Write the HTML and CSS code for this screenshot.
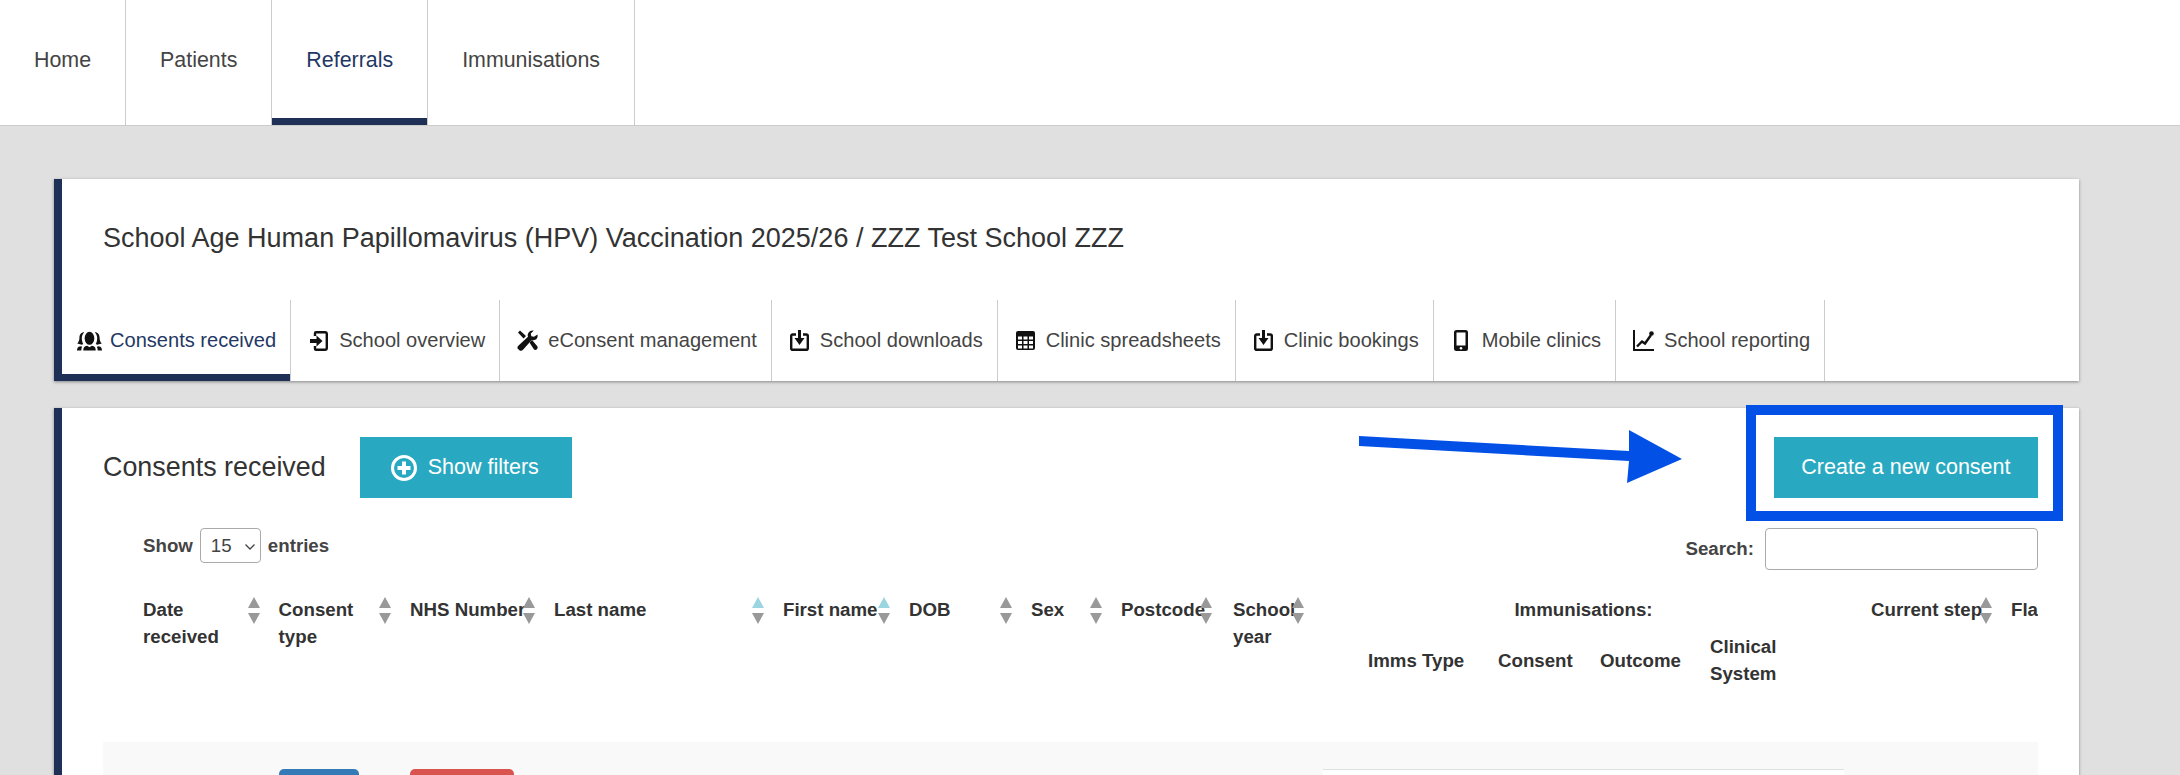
FILE: index.html
```html
<!DOCTYPE html>
<html lang="en">

<head>
    <meta charset="UTF-8">
    <title>Referrals</title>
    <link rel="stylesheet" href="styles.css">
</head>

<body>
    <nav class="topnav">
        <a class="topnav-item">Home</a>
        <a class="topnav-item">Patients</a>
        <a class="topnav-item active">Referrals</a>
        <a class="topnav-item">Immunisations</a>
    </nav>

    <main class="page">
        <section class="panel">
            <h1 class="panel-title">School Age Human Papillomavirus (HPV) Vaccination 2025/26 / ZZZ Test School ZZZ</h1>
            <div class="subtabs">
                <a class="subtab active">
                    <span class="tab-icon">
                        <svg width="26" height="20" viewBox="0 0 26 20">
                            <ellipse cx="13" cy="7.2" rx="5" ry="6.8" />
                            <path d="M6.5 20c0-3 1-4.6 4-5l2.500 1.500 2.500-1.500c3 .4 4 2 4 5z" />
                            <path d="M7.500 0.800c-3.500 0-5 2.700-5 5.700 0 2.500-.8 4.700-2.300 6.200l4.800 1.300 1.500-.8c-1-1.700-1.500-3.700-1.500-6 0-2.400.6-4.500 2.500-6.400z" />
                            <path d="M18.500 0.800c3.500 0 5 2.700 5 5.700 0 2.500.8 4.700 2.300 6.200l-4.800 1.300-1.500-.8c1-1.700 1.500-3.700 1.500-6 0-2.400-.6-4.500-2.500-6.400z" />
                            <path d="M0 20c0-2.300.6-4 3.500-4.600l2 .6c-.8 1-1 2.400-1 4zM26 20c0-2.300-.6-4-3.500-4.600l-2 .6c.8 1 1 2.400 1 4z" />
                        </svg>
                    </span>Consents received
                </a>
                <a class="subtab">
                    <span class="tab-icon">
                        <svg width="18" height="20" viewBox="0 0 18 20">
                            <path class="line" d="M5 5V2.200q0-1 1-1h9q1.800 0 1.800 1.800v14q0 1.800-1.800 1.800H6q-1 0-1-1V15" />
                            <path d="M0 8h6.500V4.500L12.500 10l-6 5.500V12H0z" />
                        </svg>
                    </span>School overview
                </a>
                <a class="subtab">
                    <span class="tab-icon">
                        <svg width="21" height="21" viewBox="0 0 21 21">
                            <path d="M20.500 4.500c.5 2.500-.3 4.300-2.200 5.300-1.200.6-2.500.6-3.600.2L5.800 20q-.8.800-1.800.8H3L.5 18.500v-1q0-1 .8-1.800l9.700-9c-.5-1.300-.4-2.600.3-3.800C12.500.9 14.500.1 16.800.5l-3 3 .5 2.700 2.700.5z" />
                            <path d="M1 2.500L3 .5l6 5.500-2.500 2.500zM12.500 12.500l2.500-2.500 5.500 6.500q.5 1.500-.5 2.700-1.500 1.300-3 .3z" />
                        </svg>
                    </span>eConsent management
                </a>
                <a class="subtab">
                    <span class="tab-icon">
                        <svg width="19" height="21" viewBox="0 0 19 21">
                            <path class="line" d="M6 4.500H2.800q-1.600 0-1.600 1.600v12.100q0 1.600 1.600 1.600h13.400q1.600 0 1.600-1.600V6.100q0-1.600-1.600-1.600H13" />
                            <path d="M8 0h3v8h3.500l-5 7-5-7H8z" />
                        </svg>
                    </span>School downloads
                </a>
                <a class="subtab">
                    <span class="tab-icon">
                        <svg width="19" height="19" viewBox="0 0 19 19">
                            <rect width="19" height="19" rx="2" />
                            <path class="cells" d="M2 5.500h4v3H2zM7.500 5.500h4v3h-4zM13 5.500h4v3h-4zM2 10h4v3H2zM7.500 10h4v3h-4zM13 10h4v3h-4zM2 14.500h4v3H2zM7.500 14.500h4v3h-4zM13 14.500h4v3h-4z" />
                        </svg>
                    </span>Clinic spreadsheets
                </a>
                <a class="subtab">
                    <span class="tab-icon">
                        <svg width="19" height="21" viewBox="0 0 19 21">
                            <path class="line" d="M6 4.500H2.800q-1.600 0-1.600 1.600v12.100q0 1.600 1.600 1.600h13.400q1.600 0 1.600-1.600V6.100q0-1.600-1.600-1.600H13" />
                            <path d="M8 0h3v8h3.500l-5 7-5-7H8z" />
                        </svg>
                    </span>Clinic bookings
                </a>
                <a class="subtab">
                    <span class="tab-icon">
                        <svg width="14" height="21" viewBox="0 0 14 21">
                            <rect width="14" height="21" rx="2.500" />
                            <rect class="cells" x="2.500" y="2.500" width="9" height="13" />
                            <circle class="cells" cx="7" cy="18.200" r="1.300" />
                        </svg>
                    </span>Mobile clinics
                </a>
                <a class="subtab">
                    <span class="tab-icon">
                        <svg width="21" height="21" viewBox="0 0 21 21">
                            <path d="M0 0h2v19h19v2H0z" />
                            <path class="line" d="M4 16.500l5-5 3 2 6-8.500" />
                            <circle cx="18.500" cy="3.500" r="2.300" />
                        </svg>
                    </span>School reporting
                </a>
            </div>
        </section>

        <section class="panel panel-list">
            <div class="list-head">
                <div class="list-head-left">
                    <h2 class="list-title">Consents received</h2>
                    <button class="btn btn-filters">
                        <svg class="btn-icon" width="26" height="26" viewBox="0 0 26 26">
                            <circle cx="13" cy="13" r="11.500" fill="none" stroke="#fff" stroke-width="3" />
                            <path d="M11 6.500h4V11h4.500v4H15v4.500h-4V15H6.500v-4H11z" fill="#fff" />
                        </svg>
                        Show filters
                    </button>
                </div>
                <button class="btn btn-create">Create a new consent</button>
            </div>

            <div class="table-wrap">
                <div class="table-tools">
                    <label class="entries">Show
                        <select class="entries-select">
                            <option>15</option>
                        </select>
                        entries</label>
                    <label class="search">Search: <input class="search-input" type="text"></label>
                </div>

                <table class="consents">
                    <colgroup>
                        <col class="c-date">
                        <col class="c-type">
                        <col class="c-nhs">
                        <col class="c-last">
                        <col class="c-first">
                        <col class="c-dob">
                        <col class="c-sex">
                        <col class="c-post">
                        <col class="c-year">
                        <col class="c-imms">
                        <col class="c-step">
                        <col class="c-flags">
                    </colgroup>
                    <thead>
                        <tr>
                            <th class="first">Date<br>received<span class="sort"></span></th>
                            <th>Consent<br>type<span class="sort"></span></th>
                            <th>NHS Number<span class="sort"></span></th>
                            <th>Last name<span class="sort asc"></span></th>
                            <th>First name<span class="sort asc"></span></th>
                            <th>DOB<span class="sort"></span></th>
                            <th>Sex<span class="sort"></span></th>
                            <th>Postcode<span class="sort sort-post"></span></th>
                            <th>School<br>year<span class="sort"></span></th>
                            <th class="imms">
                                <div class="imms-title">Immunisations:</div>
                                <div class="imms-cols">
                                    <span>Imms Type</span>
                                    <span>Consent</span>
                                    <span>Outcome</span>
                                    <span>Clinical<br>System</span>
                                </div>
                            </th>
                            <th>Current step<span class="sort"></span></th>
                            <th>Flags</th>
                        </tr>
                    </thead>
                    <tbody>
                        <tr class="odd">
                            <td></td>
                            <td><a class="pill pill-blue"></a></td>
                            <td><a class="pill pill-red"></a></td>
                            <td></td>
                            <td></td>
                            <td></td>
                            <td></td>
                            <td></td>
                            <td></td>
                            <td><div class="imms-box"></div></td>
                            <td></td>
                            <td></td>
                        </tr>
                    </tbody>
                </table>
            </div>

            <!-- annotation drawn over the screenshot -->
            <svg class="note-arrow" width="324" height="54" viewBox="0 0 324 54">
                <path d="M0 6L270 21 270 0 323 29 268 53 270 31 0 16z" fill="#0350e6" />
            </svg>
            <div class="note-box"></div>
        </section>
    </main>
</body>

</html>
```

FILE: styles.css
```css
html,
body {
    height: 775px;
    overflow: hidden;
}

body {
    font-family: "Liberation Sans", Arial, sans-serif;
    background-color: #e0e0e0;
    color: #333;
    margin: 0;
    padding: 0;
}

.topnav {
    display: flex;
    height: 125px;
    background-color: #fff;
    border-bottom: 1px solid #ccc;
}

.topnav-item {
    display: flex;
    align-items: center;
    padding: 0 34px 5px;
    font-size: 21.400px;
    color: #444;
    border-right: 1px solid #ccc;
}

.topnav-item.active {
    color: #1f3864;
    box-shadow: inset 0 -7px 0 #1f3057;
}

.page {
    padding: 53px 101px 0 54px;
}

.panel {
    background-color: #fff;
    border-left: 8px solid #1f3057;
    box-shadow: 0 1px 3px rgba(0, 0, 0, 0.4);
}

.panel-title {
    margin: 0;
    padding: 44px 41px 47px;
    font-size: 27px;
    line-height: 30px;
    font-weight: normal;
    color: #333;
}

.subtabs {
    display: flex;
    height: 81px;
}

.subtab {
    display: flex;
    align-items: center;
    padding: 0 14px 0 15px;
    font-size: 20.070px;
    color: #444;
    border-right: 1px solid #ccc;
}

.subtab.active {
    color: #1f3864;
    box-shadow: inset 0 -7px 0 #1f3057;
}

.tab-icon {
    display: flex;
    justify-content: center;
    width: 25px;
    margin-right: 8px;
}

.tab-icon svg {
    fill: #111;
}

.tab-icon .line {
    fill: none;
    stroke: #111;
    stroke-width: 2.400;
}

.tab-icon .cells {
    fill: #fff;
}

.panel-list {
    position: relative;
    margin-top: 27px;
    height: 500px;
    padding: 29px 41px 0;
}

.list-head {
    display: flex;
    justify-content: space-between;
}

.list-head-left {
    display: flex;
    align-items: center;
    gap: 34px;
}

.list-title {
    margin: 0;
    font-size: 26.900px;
    font-weight: normal;
    color: #333;
}

.btn {
    display: flex;
    align-items: center;
    gap: 11px;
    height: 61px;
    border: none;
    background-color: #29a9c1;
    color: #fff;
    font-family: inherit;
    font-size: 21.500px;
    cursor: pointer;
}

.btn-filters {
    padding: 0 33px 0 31px;
}

.btn-create {
    padding: 0 27.500px;
}

.table-wrap {
    overflow: hidden;
}

.table-tools {
    display: flex;
    justify-content: space-between;
    margin-top: 30px;
    height: 62px;
    font-size: 18.700px;
    font-weight: bold;
    color: #444;
}

.entries {
    display: flex;
    align-items: center;
    gap: 7px;
    height: 35px;
    padding-left: 40px;
}

.entries-select {
    appearance: none;
    width: 61px;
    height: 35px;
    padding-left: 10px;
    background: #fff url("data:image/svg+xml,%3Csvg xmlns='http://www.w3.org/2000/svg' width='10' height='6'%3E%3Cpath d='M.5.5l4.500 4.500 4.500-4.500' fill='none' stroke='%23444' stroke-width='1.300'/%3E%3C/svg%3E") no-repeat 44px 15px;
    border: 1px solid #aaa;
    border-radius: 4px;
    font-family: inherit;
    font-size: 18.700px;
    color: #444;
}

.search {
    display: flex;
    align-items: center;
    gap: 11px;
    height: 42px;
}

.search-input {
    width: 273px;
    height: 42px;
    box-sizing: border-box;
    background-color: #fff;
    border: 1px solid #aaa;
    border-radius: 4px;
}

.consents {
    table-layout: fixed;
    width: 2047px;
    border-collapse: collapse;
    font-size: 18.700px;
    line-height: 27px;
    color: #333;
}

.c-date { width: 175.600px; }
.c-type { width: 131.400px; }
.c-nhs { width: 144px; }
.c-last { width: 229px; }
.c-first { width: 126px; }
.c-dob { width: 122px; }
.c-sex { width: 90px; }
.c-post { width: 112px; }
.c-year { width: 90px; }
.c-imms { width: 548px; }
.c-step { width: 140px; }
.c-flags { width: 139px; }

.consents th {
    position: relative;
    height: 152px;
    box-sizing: border-box;
    padding: 6px 0 0;
    vertical-align: top;
    text-align: left;
    white-space: nowrap;
}

.consents th.first {
    padding-left: 40px;
}

.consents td {
    height: 60px;
    padding: 27px 0 0;
    vertical-align: top;
    background-color: #f9f9f9;
}

/* datatables style sort arrows, they sit over the header text */
.sort {
    position: absolute;
    top: 7px;
    right: 19px;
    width: 12px;
    height: 28px;
}

.sort-post {
    right: 21px;
}

.sort::before,
.sort::after {
    content: "";
    position: absolute;
    left: 0;
    border-left: 6px solid transparent;
    border-right: 6px solid transparent;
}

.sort::before {
    top: 0;
    border-bottom: 11px solid #999;
}

.sort::after {
    top: 16px;
    border-top: 11px solid #999;
}

.sort.asc::before {
    border-bottom-color: #9ad5e0;
}

.consents th.imms {
    padding-right: 27px;
}

.imms-title {
    text-align: center;
}

.imms-cols {
    display: grid;
    grid-template-columns: 130px 102px 110px auto;
    align-items: center;
    margin-top: 10px;
    padding-left: 45px;
}

.imms-box {
    height: 40px;
    margin-right: 27px;
    background-color: #fff;
    border-top: 1px solid #e0e0e0;
}

.pill {
    display: block;
    height: 40px;
    border-radius: 5px;
}

.pill-blue {
    width: 80px;
    background-color: #337ab7;
}

.pill-red {
    width: 104px;
    background-color: #d9534f;
}

.note-arrow {
    position: absolute;
    left: 1297px;
    top: 22px;
}

.note-box {
    position: absolute;
    top: -3px;
    right: 16px;
    width: 317px;
    height: 116px;
    box-sizing: border-box;
    border: 10.500px solid #0350e6;
}
```
